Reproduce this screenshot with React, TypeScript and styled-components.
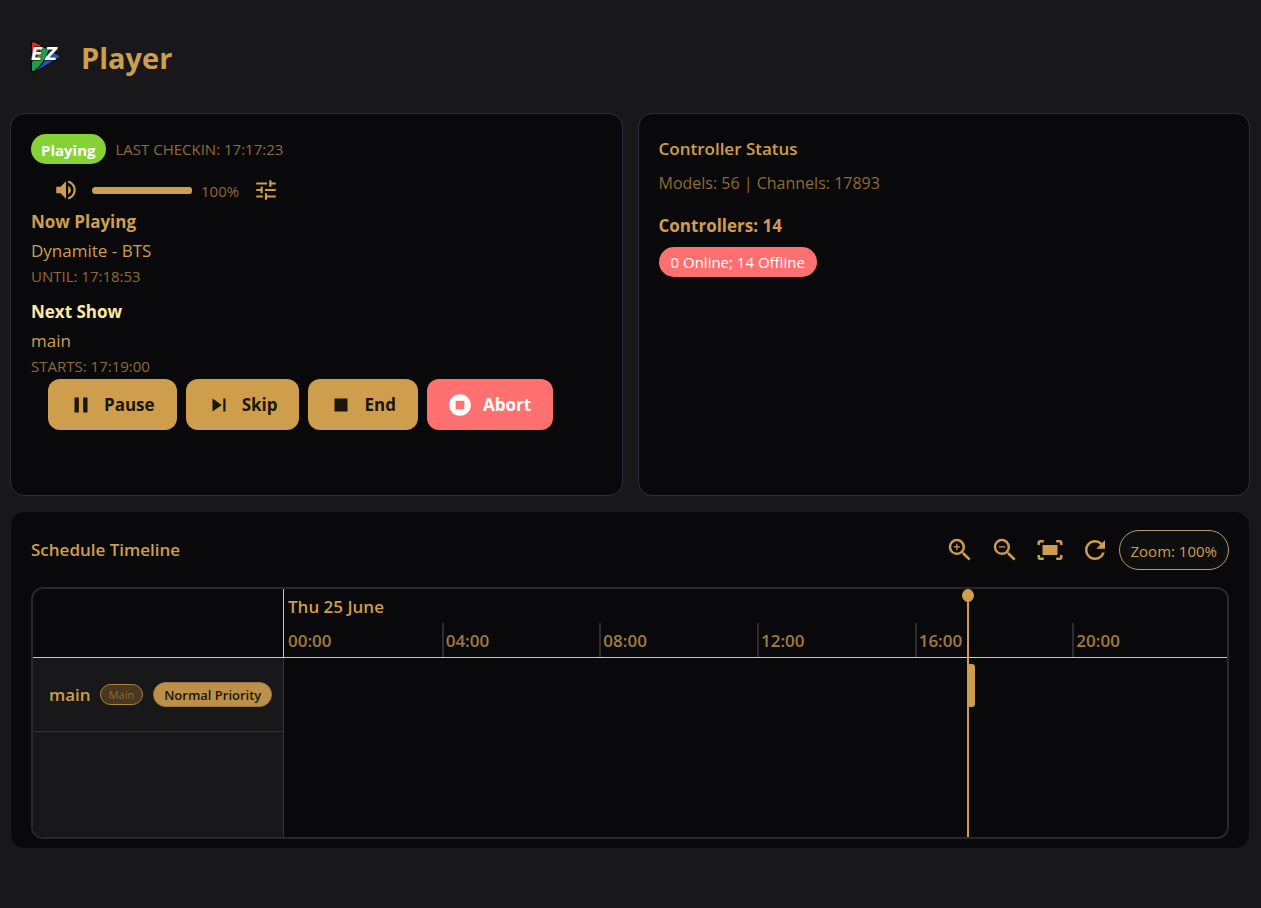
import React from 'react';
import styled, { createGlobalStyle } from 'styled-components';
import {
  MdVolumeUp, MdTune, MdPause, MdSkipNext, MdStop, MdStopCircle,
  MdZoomIn, MdZoomOut, MdFitScreen, MdRefresh,
} from 'react-icons/md';

const gold = '#cf9e4d';
const dimGold = '#8f6b33';
const ink = '#1b160b';
const danger = '#ff7070';
const panel = '#09090b';
const page = '#18181a';

const GlobalStyle = createGlobalStyle`
  * { box-sizing: border-box; }
  body {
    margin: 0;
    background: ${page};
    color: ${gold};
    font-family: "Open Sans", "Noto Sans", sans-serif;
    font-size: 17px;
    line-height: 24px;
  }
  h1, h2, h3, p { margin: 0; }
  button { font-family: inherit; cursor: pointer; }
  svg { flex-shrink: 0; }
`;

const Page = styled.main`
  min-height: 100vh;
  padding: 0 11px 58px 10px;
`;

const Header = styled.header`
  display: flex;
  align-items: center;
  gap: 17px;
  height: 113px;
  padding: 0 0 0 18px;
`;

const Title = styled.h1`
  padding-top: 2px;
  font-size: 29px;
  line-height: 40px;
  font-weight: 700;
`;

const Columns = styled.div`
  display: grid;
  grid-template-columns: 1fr 1fr;
  gap: 15px;
`;

const Card = styled.section<{ $plain?: boolean }>`
  border: 1px solid ${p => (p.$plain ? page : '#2d2d38')};
  border-radius: 14px;
  background: ${panel};
  background-clip: padding-box;
  padding: ${p => (p.$plain ? '18px 20px 9px' : '20px')};
  min-height: ${p => (p.$plain ? '0' : '383px')};
  margin-top: ${p => (p.$plain ? '15px' : '0')};
`;

const Row = styled.div`
  display: flex;
  align-items: center;
  gap: 10px;
`;

const Pill = styled.span<{ $color: string; $bold?: boolean }>`
  display: inline-flex;
  align-items: center;
  height: 30px;
  padding: ${p => (p.$bold ? '2px 10px 0' : '0 12px')};
  border-radius: 15px;
  background: ${p => p.$color};
  color: #fff;
  font-size: 15px;
  font-weight: ${p => (p.$bold ? 700 : 400)};
  white-space: nowrap;
`;

const Small = styled.p`
  color: ${dimGold};
  font-size: 15px;
  line-height: 22px;
`;

const Text = styled.p<{ $dim?: boolean }>`
  font-size: ${p => (p.$dim ? 16 : 17)}px;
  line-height: 28px;
  color: ${p => (p.$dim ? dimGold : gold)};
`;

const Heading = styled.h2<{ $light?: boolean; $weight?: number }>`
  font-size: 17px;
  line-height: 30px;
  font-weight: ${p => p.$weight ?? 700};
  color: ${p => (p.$light ? '#ffe9a6' : gold)};
`;

const Block = styled.div<{ $top?: number }>`
  margin-top: ${p => p.$top ?? 0}px;
`;

const VolumeRow = styled.div`
  display: flex;
  align-items: center;
  height: 43px;
  padding: 9px 0 0 22px;
`;

const IconButton = styled.button<{ $size: number }>`
  display: flex;
  align-items: center;
  justify-content: center;
  width: ${p => p.$size}px;
  height: ${p => p.$size}px;
  padding: 0;
  border: 0;
  background: none;
  color: ${gold};
`;

const Slider = styled.input`
  appearance: none;
  width: 100px;
  height: 7px;
  margin: 0 9px 0 13px;
  border-radius: 4px;
  background: ${gold};
  &::-webkit-slider-thumb { appearance: none; width: 7px; height: 7px; border-radius: 4px; background: ${gold}; }
`;

const VolumeValue = styled.output`
  width: 52px;
  padding-top: 2px;
  color: ${dimGold};
  font-size: 15px;
`;

const Actions = styled.div`
  display: flex;
  gap: 9px;
  margin-top: 2px;
  padding-left: 17px;
`;

const Action = styled.button<{ $danger?: boolean }>`
  display: flex;
  align-items: center;
  gap: 10px;
  height: 51px;
  padding: 0 22px 0 20px;
  border: 0;
  border-radius: 12px;
  background: ${p => (p.$danger ? danger : gold)};
  color: ${p => (p.$danger ? '#fff' : ink)};
  font-size: 17px;
  font-weight: 700;
`;

const ScheduleHead = styled.div`
  display: flex;
  align-items: center;
  justify-content: space-between;
  height: 40px;
`;

const Tools = styled.div`
  display: flex;
  align-items: center;
  gap: 15px;
`;

const ZoomLabel = styled.span`
  height: 40px;
  margin-left: -6px;
  padding: 8px 11px 0;
  border: 1px solid #b79d63;
  border-radius: 20px;
  font-size: 15px;
  background: #0d0e0d;
`;

const Timeline = styled.div`
  display: grid;
  grid-template-columns: 251px 1fr;
  grid-template-rows: 69px 179px;
  margin-top: 17px;
  border: 2px solid #29292c;
  border-radius: 12px;
  overflow: hidden;
`;

const Corner = styled.div`
  border-right: 1px solid #c8c8c8;
  border-bottom: 1px solid #c8c8c8;
`;

const Axis = styled.div`
  display: flex;
  flex-direction: column;
  justify-content: space-between;
  border-bottom: 1px solid #c8c8c8;
`;

const DayLabel = styled.div`
  padding: 6px 0 0 4px;
  font-weight: 600;
`;

const Hours = styled.div`
  display: grid;
  grid-template-columns: repeat(5, 158fr) 155fr;
`;

const Hour = styled.div`
  height: 34px;
  padding: 6px 0 0 4px;
  color: #a27b3c;
  font-weight: 600;
  & + & { padding-left: 2px; border-left: 2px solid #2d2d30; }
`;

const Side = styled.div`
  border-right: 1px solid #343437;
  background: ${page};
`;

const SideRow = styled.div`
  display: flex;
  align-items: center;
  height: 74px;
  padding-left: 16px;
  border-bottom: 1px solid #343437;
`;

const RowName = styled.span`
  margin-right: 9px;
  font-weight: 600;
`;

const Tag = styled.span<{ $solid?: boolean }>`
  display: flex;
  align-items: center;
  height: ${p => (p.$solid ? 25 : 21)}px;
  margin-right: 10px;
  padding: 0 ${p => (p.$solid ? 10 : 8)}px;
  border: 1px solid ${p => (p.$solid ? '#9c7a41' : '#b0853f')};
  border-radius: 13px;
  background: ${p => (p.$solid ? '#bc9048' : '#49371f')};
  color: ${p => (p.$solid ? ink : '#8f6b33')};
  font-size: ${p => (p.$solid ? 13 : 11)}px;
  font-weight: ${p => (p.$solid ? 600 : 400)};
  white-space: nowrap;
`;

const Lane = styled.div`
  position: relative;
`;

const Event = styled.div`
  position: absolute;
  top: 6px;
  left: 72.4%;
  width: 8px;
  height: 43px;
  border-radius: 3px;
  background: ${gold};
`;

const NowLine = styled.div`
  position: absolute;
  top: -69px;
  bottom: 0;
  left: 72.4%;
  width: 2px;
  background: ${gold};
  &::before {
    content: '';
    position: absolute;
    top: 0;
    left: -5px;
    width: 12px;
    height: 13px;
    border-radius: 50%;
    background: ${gold};
  }
`;

const LogoText = styled.text`
  font-family: "DejaVu Sans", sans-serif;
  font-size: 17px;
  font-weight: 700;
  font-style: italic;
`;

const Logo = () => (
  <svg width="36" height="36" viewBox="0 0 36 36" role="img" aria-label="EZ">
    <path d="M2.5 3.5 Q3.500 1 6 2 L31 15 Q34 17.500 31 20 L7 33.500 Q3 35 2.500 31 Z" fill="#0b0b0b" />
    <path d="M4 4 L5.500 3 L12.500 6.500 Q12 13 4 22 Z" fill="#e6261f" />
    <path d="M13.500 7.500 L20.500 11 Q17 23 6 32 L4 31.500 L4 23 Q12 15 13.500 7.500 Z" fill="#1f9a48" />
    <path d="M21.500 11.500 L31.500 17 L31.500 18 L8 32 Q18 23 21.500 11.500 Z" fill="#1c56b5" />
    <LogoText x="3" y="21" fill="#fff" stroke="#111" strokeWidth="1" paintOrder="stroke">E</LogoText>
    <LogoText x="17" y="21" fill="#fff" stroke="#111" strokeWidth="1" paintOrder="stroke">Z</LogoText>
  </svg>
);

const hours = ['00:00', '04:00', '08:00', '12:00', '16:00', '20:00'];

export default function App() {
  return (
    <>
      <GlobalStyle />
      <Page>
        <Header>
          <Logo />
          <Title>Player</Title>
        </Header>
        <Columns>
          <Card>
            <Row>
              <Pill $color="#86d236" $bold>Playing</Pill>
              <Small>LAST CHECKIN: 17:17:23</Small>
            </Row>
            <VolumeRow>
              <IconButton $size={26} aria-label="Mute"><MdVolumeUp size={26} /></IconButton>
              <Slider type="range" aria-label="Volume" min={0} max={100} defaultValue={100} />
              <VolumeValue>100%</VolumeValue>
              <IconButton $size={26} aria-label="Audio settings"><MdTune size={26} /></IconButton>
            </VolumeRow>
            <Block>
              <Heading>Now Playing</Heading>
              <Text>Dynamite - BTS</Text>
              <Small>UNTIL: 17:18:53</Small>
            </Block>
            <Block $top={10}>
              <Heading $light>Next Show</Heading>
              <Text>main</Text>
              <Small>STARTS: 17:19:00</Small>
            </Block>
            <Actions>
              <Action><MdPause size={26} />Pause</Action>
              <Action><MdSkipNext size={26} />Skip</Action>
              <Action><MdStop size={26} />End</Action>
              <Action $danger><MdStopCircle size={26} />Abort</Action>
            </Actions>
          </Card>
          <Card>
            <Heading $weight={600}>Controller Status</Heading>
            <Block $top={5}>
              <Text $dim>Models: 56 | Channels: 17893</Text>
            </Block>
            <Block $top={14}>
              <Heading>Controllers: 14</Heading>
            </Block>
            <Block $top={6}>
              <Pill $color={danger}>0 Online; 14 Offline</Pill>
            </Block>
          </Card>
        </Columns>
        <Card $plain>
          <ScheduleHead>
            <Heading $weight={600}>Schedule Timeline</Heading>
            <Tools>
              <IconButton $size={30} aria-label="Zoom in"><MdZoomIn size={30} /></IconButton>
              <IconButton $size={30} aria-label="Zoom out"><MdZoomOut size={30} /></IconButton>
              <IconButton $size={30} aria-label="Fit to screen"><MdFitScreen size={30} /></IconButton>
              <IconButton $size={30} aria-label="Refresh"><MdRefresh size={30} /></IconButton>
              <ZoomLabel>Zoom: 100%</ZoomLabel>
            </Tools>
          </ScheduleHead>
          <Timeline>
            <Corner />
            <Axis>
              <DayLabel>Thu 25 June</DayLabel>
              <Hours>{hours.map(h => <Hour key={h}>{h}</Hour>)}</Hours>
            </Axis>
            <Side>
              <SideRow>
                <RowName>main</RowName>
                <Tag>Main</Tag>
                <Tag $solid>Normal Priority</Tag>
              </SideRow>
            </Side>
            <Lane>
              <Event />
              <NowLine />
            </Lane>
          </Timeline>
        </Card>
      </Page>
    </>
  );
}
